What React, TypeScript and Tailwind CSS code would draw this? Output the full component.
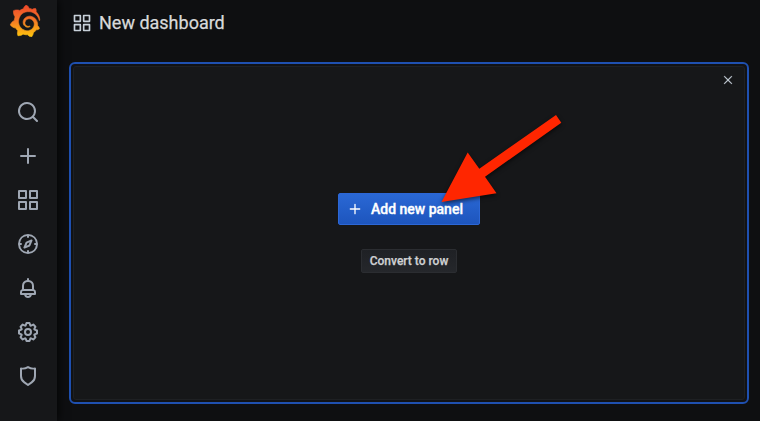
import React from "react";
import { SiGrafana } from "react-icons/si";

const APPS = "M10,13H3a1,1,0,0,0-1,1v7a1,1,0,0,0,1,1h7a1,1,0,0,0,1-1V14A1,1,0,0,0,10,13ZM9,20H4V15H9ZM21,2H14a1,1,0,0,0-1,1v7a1,1,0,0,0,1,1h7a1,1,0,0,0,1-1V3A1,1,0,0,0,21,2ZM20,9H15V4h5Zm1,4H14a1,1,0,0,0-1,1v7a1,1,0,0,0,1,1h7a1,1,0,0,0,1-1V14A1,1,0,0,0,21,13Zm-1,7H15V15h5ZM10,2H3A1,1,0,0,0,2,3v7a1,1,0,0,0,1,1h7a1,1,0,0,0,1-1V3A1,1,0,0,0,10,2ZM9,9H4V4H9Z";
const PLUS = "M19,11H13V5a1,1,0,0,0-2,0v6H5a1,1,0,0,0,0,2h6v6a1,1,0,0,0,2,0V13h6a1,1,0,0,0,0-2Z";
const TIMES = "M13.41,12l6.3-6.29a1,1,0,1,0-1.42-1.42L12,10.59,5.71,4.29A1,1,0,0,0,4.29,5.71L10.59,12l-6.3,6.29a1,1,0,0,0,1.42,1.42L12,13.41l6.29,6.3a1,1,0,0,0,1.42-1.42Z";
const SEARCH = "M21.71,20.29,18,16.61A9,9,0,1,0,16.61,18l3.68,3.68a1,1,0,0,0,1.42,0A1,1,0,0,0,21.71,20.29ZM11,18a7,7,0,1,1,7-7A7,7,0,0,1,11,18Z";
const COMPASS = "M12,2A10,10,0,1,0,22,12,10,10,0,0,0,12,2Zm1,17.93V19a1,1,0,0,0-2,0v.93A8,8,0,0,1,4.07,13H5a1,1,0,0,0,0-2H4.07A8,8,0,0,1,11,4.07V5a1,1,0,0,0,2,0V4.07A8,8,0,0,1,19.93,11H19a1,1,0,0,0,0,2h.93A8,8,0,0,1,13,19.93ZM15.14,7.55l-5,2.12a1,1,0,0,0-.52.52l-2.12,5a1,1,0,0,0,.21,1.1,1,1,0,0,0,.7.3.93.93,0,0,0,.4-.09l5-2.12a1,1,0,0,0,.52-.52l2.12-5a1,1,0,0,0-1.31-1.31Zm-2.49,5.1-2.28,1,1-2.28,2.28-1Z";
const BELL = "M18,13.18V10a6,6,0,0,0-5-5.91V3a1,1,0,0,0-2,0V4.09A6,6,0,0,0,6,10v3.18A3,3,0,0,0,4,16v2a1,1,0,0,0,1,1H8.14a4,4,0,0,0,7.72,0H19a1,1,0,0,0,1-1V16A3,3,0,0,0,18,13.18ZM8,10a4,4,0,0,1,8,0v3H8Zm4,10a2,2,0,0,1-1.72-1h3.44A2,2,0,0,1,12,20Zm6-3H6V16a1,1,0,0,1,1-1H17a1,1,0,0,1,1,1Z";
const COG = "M21.32,9.55l-1.89-.63.89-1.78A1,1,0,0,0,20.13,6L18,3.87a1,1,0,0,0-1.15-.19l-1.78.89-.63-1.89A1,1,0,0,0,13.5,2h-3a1,1,0,0,0-.95.68L8.92,4.57,7.14,3.68A1,1,0,0,0,6,3.87L3.87,6a1,1,0,0,0-.19,1.15l.89,1.78-1.89.63A1,1,0,0,0,2,10.5v3a1,1,0,0,0,.68.95l1.89.63-.89,1.78A1,1,0,0,0,3.87,18L6,20.13a1,1,0,0,0,1.15.19l1.78-.89.63,1.89a1,1,0,0,0,.95.68h3a1,1,0,0,0,.95-.68l.63-1.89,1.78.89A1,1,0,0,0,18,20.13L20.13,18a1,1,0,0,0,.19-1.15l-.89-1.78,1.89-.63A1,1,0,0,0,22,13.5v-3A1,1,0,0,0,21.32,9.55ZM20,12.78l-1.2.4A2,2,0,0,0,17.64,16l.57,1.14-1.1,1.1L16,17.64a2,2,0,0,0-2.79,1.16l-.4,1.2H11.22l-.4-1.2A2,2,0,0,0,8,17.64l-1.14.57-1.1-1.1L6.36,16A2,2,0,0,0,5.2,13.18L4,12.78V11.22l1.2-.4A2,2,0,0,0,6.36,8L5.79,6.89l1.1-1.1L8,6.36A2,2,0,0,0,10.82,5.2l.4-1.2h1.56l.4,1.2A2,2,0,0,0,16,6.36l1.14-.57,1.1,1.1L17.64,8a2,2,0,0,0,1.16,2.79l1.2.4ZM12,8a4,4,0,1,0,4,4A4,4,0,0,0,12,8Zm0,6a2,2,0,1,1,2-2A2,2,0,0,1,12,14Z";
const SHIELD = "M19.63,3.65a1,1,0,0,0-.84-.2,8,8,0,0,1-6.22-1.27,1,1,0,0,0-1.14,0A8,8,0,0,1,5.21,3.45a1,1,0,0,0-.84.2A1,1,0,0,0,4,4.43v7.45a9,9,0,0,0,3.77,7.33l3.65,2.6a1,1,0,0,0,1.16,0l3.65-2.6A9,9,0,0,0,20,11.88V4.43A1,1,0,0,0,19.63,3.65ZM18,11.88a7,7,0,0,1-2.93,5.7L12,19.77,8.93,17.58A7,7,0,0,1,6,11.88V5.58a10,10,0,0,0,6-1.39,10,10,0,0,0,6,1.39Z";

const NAV = [
  { label: "Search", path: SEARCH },
  { label: "Create", path: PLUS },
  { label: "Dashboards", path: APPS },
  { label: "Explore", path: COMPASS },
  { label: "Alerting", path: BELL },
  { label: "Configuration", path: COG },
  { label: "Server admin", path: SHIELD },
];

function Icon({ path, className }: { path: string; className: string }) {
  return (
    <svg viewBox="0 0 24 24" fill="currentColor" className={className} aria-hidden="true">
      <path d={path} />
    </svg>
  );
}

function Sidebar() {
  return (
    <nav className="z-10 flex w-[57px] shrink-0 flex-col items-center bg-[#161719] text-[#9fa7b3] shadow-[0_0_10px_#000]">
      <div className="flex h-[90px] w-full pt-[5px] pl-[9px]">
        <svg width="0" height="0" className="absolute" aria-hidden="true">
          <linearGradient id="flame" x1="0" y1="0" x2="0" y2="1">
            <stop offset="0" stopColor="#f0482a" />
            <stop offset="0.45" stopColor="#f37327" />
            <stop offset="1" stopColor="#fdc60c" />
          </linearGradient>
        </svg>
        <SiGrafana className="size-8 [&_path]:fill-[url(#flame)] [&_path]:stroke-[url(#flame)] [&_path]:stroke-[0.45]" />
      </div>
      {NAV.map((item) => (
        <button key={item.label} aria-label={item.label} className="flex h-11 w-full items-center justify-center pr-px">
          <Icon path={item.path} className="size-6" />
        </button>
      ))}
    </nav>
  );
}

function AddPanel() {
  return (
    <section className="relative mx-3 mr-[11px] h-[342px] rounded-md border-2 border-[#1f50b0] bg-[#111215] p-[2px]">
      <div className="flex h-full flex-col items-center rounded-[3px] border border-[#1e2023] bg-[#161719]">
        <button aria-label="Close" className="mt-[5px] mr-2 flex size-4 items-center justify-center self-end text-[#c7d0d9]">
          <Icon path={TIMES} className="size-3 stroke-current stroke-[0.4]" />
        </button>
        <button className="mt-[105px] mr-[1px] flex h-8 w-[142px] items-center rounded-[2px] border border-[#2c67d6] bg-linear-to-b from-[#2a68d5] to-[#1d55bd] pl-2 text-sm font-medium text-white">
          <Icon path={PLUS} className="mr-[8.5px] size-4" />
          <span className="[-webkit-text-stroke:0.35px_white]">Add new panel</span>
        </button>
        <button className="mt-6 mr-[1px] flex h-6 w-24 items-center justify-center rounded-[2px] border border-[#2b2d31] bg-linear-to-b from-[#1f2125] to-[#25272b] pl-px text-xs font-medium text-[#d0d1d3] [-webkit-text-stroke:0.25px_#d0d1d3]">
          Convert to row
        </button>
      </div>
      <svg width="140" height="110" viewBox="430 105 140 110" className="absolute top-[41px] left-[359px] drop-shadow-[0_2px_2px_rgba(0,0,0,0.6)]" aria-hidden="true">
        <path d="M441.5 202 467.7 152.5 479.3 168.7 556 115 561.3 122.7 485 176.7 496.5 193.3Z" fill="#ff2600" />
      </svg>
    </section>
  );
}

export default function App() {
  return (
    <div className="flex h-[421px] w-[760px] overflow-hidden bg-[#0e0f11] font-[Roboto,sans-serif]">
      <Sidebar />
      <main className="min-w-0 flex-1">
        <header className="flex h-[62px] items-start pt-[11px] pl-[15px] text-[#c7d0d9]">
          <Icon path={APPS} className="mt-[2px] size-5" />
          <h1 className="ml-[7px] text-lg leading-6 text-[#d8d9da] [-webkit-text-stroke:0.25px_#d8d9da]">New dashboard</h1>
        </header>
        <AddPanel />
      </main>
    </div>
  );
}
